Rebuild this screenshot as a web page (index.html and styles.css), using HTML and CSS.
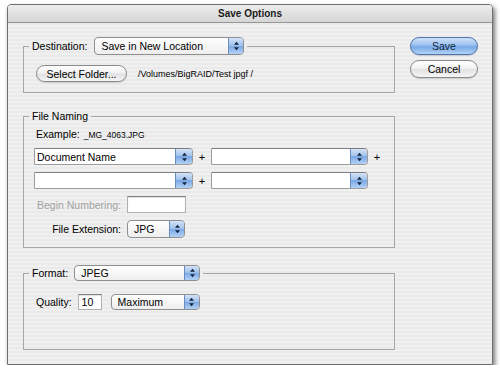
FILE: index.html
```html
<!DOCTYPE html>
<html lang="en">
    <head>
        <meta charset="utf-8" />
        <title>Save Options</title>
        <link rel="stylesheet" href="styles.css">
    </head>
    <body>
        <div class="window">
            <div class="titlebar">Save Options</div>

            <div class="content">
                <div class="main">

                    <fieldset class="group dest">
                        <legend>
                            <div class="head">
                                <span>Destination:</span>
                                <div class="popup popup-dest">
                                    <span class="value">Save in New Location</span>
                                    <span class="stepper"><svg width="7" height="10" viewBox="0 0 7 10"><path d="M3.5 0.8 L6 3.8 H1 Z M3.5 9.2 L6 6.2 H1 Z" /></svg></span>
                                </div>
                            </div>
                        </legend>
                        <div class="inner dest-inner">
                            <button class="btn btn-folder">Select Folder...</button>
                            <span class="path">/Volumes/BigRAID/Test jpgf /</span>
                        </div>
                    </fieldset>

                    <fieldset class="group naming">
                        <legend><div class="head head-text">File Naming</div></legend>
                        <div class="inner naming-inner">
                            <div class="example">Example: <span class="sample">_MG_4063.JPG</span></div>

                            <div class="name-row">
                                <div class="popup combo combo-a">
                                    <span class="value">Document Name</span>
                                    <span class="stepper"><svg width="7" height="10" viewBox="0 0 7 10"><path d="M3.5 0.8 L6 3.8 H1 Z M3.5 9.2 L6 6.2 H1 Z" /></svg></span>
                                </div>
                                <span class="plus">+</span>
                                <div class="popup combo combo-b">
                                    <span class="value"></span>
                                    <span class="stepper"><svg width="7" height="10" viewBox="0 0 7 10"><path d="M3.5 0.8 L6 3.8 H1 Z M3.5 9.2 L6 6.2 H1 Z" /></svg></span>
                                </div>
                                <span class="plus">+</span>
                            </div>

                            <div class="name-row">
                                <div class="popup combo combo-a">
                                    <span class="value"></span>
                                    <span class="stepper"><svg width="7" height="10" viewBox="0 0 7 10"><path d="M3.5 0.8 L6 3.8 H1 Z M3.5 9.2 L6 6.2 H1 Z" /></svg></span>
                                </div>
                                <span class="plus">+</span>
                                <div class="popup combo combo-b">
                                    <span class="value"></span>
                                    <span class="stepper"><svg width="7" height="10" viewBox="0 0 7 10"><path d="M3.5 0.8 L6 3.8 H1 Z M3.5 9.2 L6 6.2 H1 Z" /></svg></span>
                                </div>
                            </div>

                            <div class="opt-row">
                                <span class="opt-label disabled">Begin Numbering:</span>
                                <span class="field field-num"></span>
                            </div>

                            <div class="opt-row">
                                <span class="opt-label">File Extension:</span>
                                <div class="popup popup-ext">
                                    <span class="value">JPG</span>
                                    <span class="stepper"><svg width="7" height="10" viewBox="0 0 7 10"><path d="M3.5 0.8 L6 3.8 H1 Z M3.5 9.2 L6 6.2 H1 Z" /></svg></span>
                                </div>
                            </div>
                        </div>
                    </fieldset>

                    <fieldset class="group format">
                        <legend>
                            <div class="head">
                                <span>Format:</span>
                                <div class="popup popup-format">
                                    <span class="value">JPEG</span>
                                    <span class="stepper"><svg width="7" height="10" viewBox="0 0 7 10"><path d="M3.5 0.8 L6 3.8 H1 Z M3.5 9.2 L6 6.2 H1 Z" /></svg></span>
                                </div>
                            </div>
                        </legend>
                        <div class="inner format-inner">
                            <span>Quality:</span>
                            <span class="field field-quality">10</span>
                            <div class="popup popup-quality">
                                <span class="value">Maximum</span>
                                <span class="stepper"><svg width="7" height="10" viewBox="0 0 7 10"><path d="M3.5 0.8 L6 3.8 H1 Z M3.5 9.2 L6 6.2 H1 Z" /></svg></span>
                            </div>
                        </div>
                    </fieldset>

                </div>

                <div class="actions">
                    <button class="btn btn-default">Save</button>
                    <button class="btn btn-cancel">Cancel</button>
                </div>
            </div>
        </div>
    </body>
</html>
```

FILE: styles.css
```css
* {
    margin: 0;
    padding: 0;
    box-sizing: border-box;
}

body {
    background: #fff;
    font-family: "Liberation Sans", Arial, sans-serif;
    font-size: 10.5px;
    color: #000;
}

.window {
    margin: 4px 0 0 7px;
    width: 486px;
    height: 361px;
    border: 1px solid #6f6f6f;
    border-radius: 4px 4px 0 0;
    background: repeating-linear-gradient(to bottom, #f0f0f0 0, #f0f0f0 2px, #eaeaea 2px, #eaeaea 4px);
    box-shadow: 2px 3px 5px rgba(0, 0, 0, 0.55);
    overflow: hidden;
}

.titlebar {
    height: 18px;
    line-height: 17px;
    text-align: center;
    font-weight: bold;
    font-size: 10px;
    color: #1c1c1c;
    background: linear-gradient(#ececec, #d6d6d6);
    border-bottom: 1px solid #959595;
}

.content {
    display: flex;
    gap: 15px;
    padding: 14px 13px 0 15px;
}

.main {
    width: 372px;
}

/* group boxes */

.group {
    border: 1px solid #a6a6a6;
    min-width: 0;
}

.group legend {
    margin-left: 5px;
    padding: 0 3px;
}

.head {
    display: flex;
    align-items: center;
    gap: 7px;
}

.head-text {
    line-height: 14px;
}

.naming {
    margin-top: 16px;
}

.format {
    margin-top: 17px;
}

.format .head {
    gap: 6px;
}

.dest-inner {
    display: flex;
    align-items: center;
    gap: 11px;
    padding: 10px 12px 10px;
}

.path {
    font-size: 9px;
}

.naming-inner {
    padding: 0 10px 9px;
}

.example {
    margin-top: 5px;
    padding-left: 2px;
    line-height: 12px;
}

.sample {
    font-size: 8.5px;
    margin-left: 1px;
}

.name-row {
    display: flex;
    align-items: center;
    margin-top: 7px;
    height: 17px;
}

.name-row > * {
    flex-shrink: 0;
}

.plus {
    width: 18px;
    text-align: center;
    font-size: 11px;
}

.opt-row {
    display: grid;
    grid-template-columns: 87px auto;
    column-gap: 6px;
    align-items: center;
    justify-items: start;
    margin-top: 7px;
}

.opt-label {
    justify-self: end;
}

.disabled {
    color: #a2a2a2;
}

.format-inner {
    display: flex;
    align-items: center;
    padding: 13px 12px 39px;
}

/* controls */

.popup {
    display: flex;
    border: 1px solid #8f8f8f;
    border-radius: 4px;
    background: linear-gradient(#ffffff, #eeeeee);
    overflow: hidden;
}

.popup .value {
    flex: 1;
    padding-left: 6px;
    display: flex;
    align-items: center;
}

.stepper {
    display: flex;
    align-items: center;
    justify-content: center;
    width: 15px;
    border-left: 1px solid #6a8cc0;
    border-radius: 0 3px 3px 0;
    background: linear-gradient(#d3e3f8, #9dbfec 50%, #7aa8e4 50%, #b3d1f5);
}

.stepper path {
    fill: #13243f;
}

.popup-dest {
    width: 150px;
    height: 18px;
}

.combo {
    height: 17px;
    border-color: #9c9c9c;
    border-top-color: #7f7f7f;
    border-radius: 1px 4px 4px 1px;
    background: #fff;
}

.combo .value {
    padding-left: 2px;
}

.combo .stepper {
    width: 17px;
}

.combo-a {
    width: 159px;
}

.combo-b {
    width: 157px;
}

.popup-ext {
    width: 58px;
    height: 18px;
}

.popup-format {
    width: 126px;
    height: 16px;
}

.popup-quality {
    width: 89px;
    height: 16px;
    margin-left: 9px;
}

.field {
    display: flex;
    align-items: center;
    background: #fff;
    border: 1px solid #b0b0b0;
    border-top-color: #808080;
    box-shadow: inset 0 1px 1px rgba(0, 0, 0, 0.12);
}

.field-num {
    width: 59px;
    height: 17px;
}

.field-quality {
    width: 24px;
    height: 16px;
    margin-left: 6px;
    padding-left: 3px;
}

.btn {
    font-family: "Liberation Sans", Arial, sans-serif;
    font-size: 10.5px;
    color: #000;
    border: 1px solid #8a8a8a;
    border-radius: 9px;
    background: linear-gradient(#fefefe, #f2f2f2 45%, #e2e2e2 55%, #f6f6f6);
    box-shadow: 0 1px 1px rgba(0, 0, 0, 0.15);
}

.btn-folder {
    width: 91px;
    height: 17px;
}

.actions {
    display: flex;
    flex-direction: column;
    gap: 5px;
}

.btn-default,
.btn-cancel {
    width: 68px;
    height: 18px;
}

.btn-default {
    color: #0c1f3c;
    border-color: #4f74ad;
    background: linear-gradient(#cfe1f8, #9cc0ee 45%, #78a9e6 55%, #b2d3f7);
}
```
